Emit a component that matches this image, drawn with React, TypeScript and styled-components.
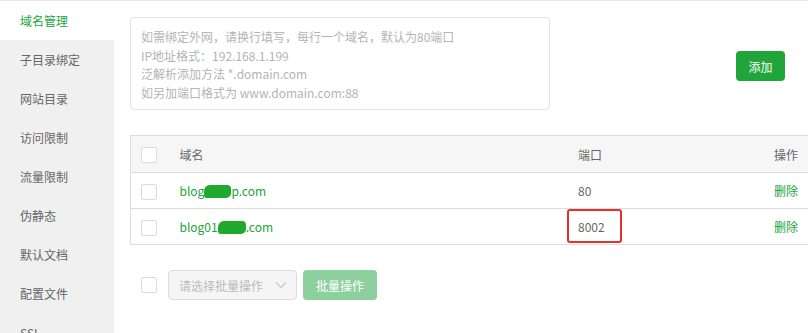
import React from "react";
import styled, { createGlobalStyle } from "styled-components";

const Global = createGlobalStyle`
  html, body { margin: 0; padding: 0; background: #fff; }
  body { font-family: "Noto Sans CJK SC", "Noto Sans", sans-serif; font-size: 12px; color: #666; }
  * { box-sizing: border-box; }
`;

const Page = styled.div`
  display: flex;
  border-top: 1px solid #e8e8e8;
  height: 333px;
  overflow: hidden;
`;

const Sidebar = styled.nav`
  width: 114px;
  flex: none;
  background: #f0f0f0;
  display: flex;
  flex-direction: column;
`;

const NavItem = styled.div<{ $active?: boolean }>`
  height: 39px;
  flex: none;
  display: flex;
  align-items: center;
  padding-left: 20px;
  font-size: 12px;
  color: ${(p) => (p.$active ? "#20a53a" : "#666")};
  background: ${(p) => (p.$active ? "#fff" : "transparent")};
`;

const Content = styled.main`
  flex: 1;
  padding: 16px 0 0 16px;
  display: flex;
  flex-direction: column;
`;

const TopRow = styled.div`
  display: flex;
  align-items: flex-start;
`;

const Area = styled.div`
  width: 420px;
  height: 93px;
  border: 1px solid #e2e2e2;
  border-radius: 4px;
  padding: 10px 10px;
  color: #b4b4b4;
  font-size: 12px;
  line-height: 18.5px;
`;

const AddButton = styled.button`
  margin: 34px 23px 0 auto;
  width: 49px;
  height: 30px;
  border: none;
  border-radius: 4px;
  background: #20a53a;
  color: #fff;
  font-family: inherit;
  font-size: 12px;
  padding: 0;
`;

const Table = styled.table`
  margin-top: 25px;
  width: 678px;
  border-collapse: collapse;
  border: 1px solid #ddd;
  border-right: none;
  font-size: 12px;
`;

const Th = styled.th<{ $align?: string; $w?: number }>`
  height: 37px;
  background: #f6f6f6;
  font-weight: normal;
  color: #666;
  text-align: ${(p) => p.$align || "left"};
  padding: 0 10px;
  ${(p) => (p.$w ? `width: ${p.$w}px;` : "")}
  border-bottom: 1px solid #ddd;
`;

const Td = styled.td<{ $align?: string; $green?: boolean }>`
  height: 36px;
  padding: 0 10px;
  text-align: ${(p) => p.$align || "left"};
  color: ${(p) => (p.$green ? "#20a53a" : "#666")};
  border-bottom: 1px solid #ddd;
  position: relative;
`;

const Check = styled.span`
  display: inline-block;
  vertical-align: middle;
  width: 16px;
  height: 16px;
  border: 1px solid #dcdcdc;
  border-radius: 2px;
  background: #fff;
`;

const Blob = styled.span<{ $w: number }>`
  display: inline-block;
  width: ${(p) => p.$w}px;
  height: 13px;
  border-radius: 6px 4px 5px 3px;
  background: #1faa2f;
  vertical-align: -2px;
`;

const Highlight = styled.span`
  position: absolute;
  left: -1px;
  top: 0px;
  width: 55px;
  height: 34px;
  border: 2px solid #e53030;
  border-radius: 3px;
`;

const BottomRow = styled.div`
  margin-top: 25px;
  display: flex;
  align-items: center;
  padding-left: 11px;
`;

const Select = styled.div`
  margin-left: 11px;
  width: 129px;
  height: 30px;
  border: 1px solid #ddd;
  border-radius: 4px;
  background: #f5f5f5;
  color: #bbb;
  display: flex;
  align-items: center;
  justify-content: space-between;
  padding: 0 9px 0 10px;
`;

const BatchButton = styled.button`
  margin-left: 6px;
  width: 74px;
  height: 30px;
  border: none;
  border-radius: 4px;
  background: #8ed09d;
  color: #fff;
  font-family: inherit;
  font-size: 12px;
  padding: 0;
`;

const navItems = ["域名管理", "子目录绑定", "网站目录", "访问限制", "流量限制", "伪静态", "默认文档", "配置文件", "SSL"];

export default function App() {
  return (
    <>
      <Global />
      <Page>
        <Sidebar>
          {navItems.map((n, i) => (
            <NavItem key={n} $active={i === 0}>{n}</NavItem>
          ))}
        </Sidebar>
        <Content>
          <TopRow>
            <Area>
              <div>如需绑定外网，请换行填写，每行一个域名，默认为80端口</div>
              <div>IP地址格式：192.168.1.199</div>
              <div>泛解析添加方法 *.domain.com</div>
              <div>如另加端口格式为 www.domain.com:88</div>
            </Area>
            <AddButton>添加</AddButton>
          </TopRow>
          <Table>
            <thead>
              <tr>
                <Th $w={39}><Check /></Th>
                <Th>域名</Th>
                <Th $w={150}>端口</Th>
                <Th $align="right" $w={90}>操作</Th>
              </tr>
            </thead>
            <tbody>
              <tr>
                <Td><Check /></Td>
                <Td $green>blog<Blob $w={27} />p.com</Td>
                <Td>80</Td>
                <Td $align="right" $green>删除</Td>
              </tr>
              <tr>
                <Td><Check /></Td>
                <Td $green>blog01<Blob $w={28} />.com</Td>
                <Td>8002<Highlight /></Td>
                <Td $align="right" $green>删除</Td>
              </tr>
            </tbody>
          </Table>
          <BottomRow>
            <Check />
            <Select>
              <span>请选择批量操作</span>
              <svg width="12" height="8" viewBox="0 0 12 8">
                <path d="M1 1.5 L6 6.5 L11 1.5" fill="none" stroke="#c8c8c8" strokeWidth="1.2" />
              </svg>
            </Select>
            <BatchButton>批量操作</BatchButton>
          </BottomRow>
        </Content>
      </Page>
    </>
  );
}
